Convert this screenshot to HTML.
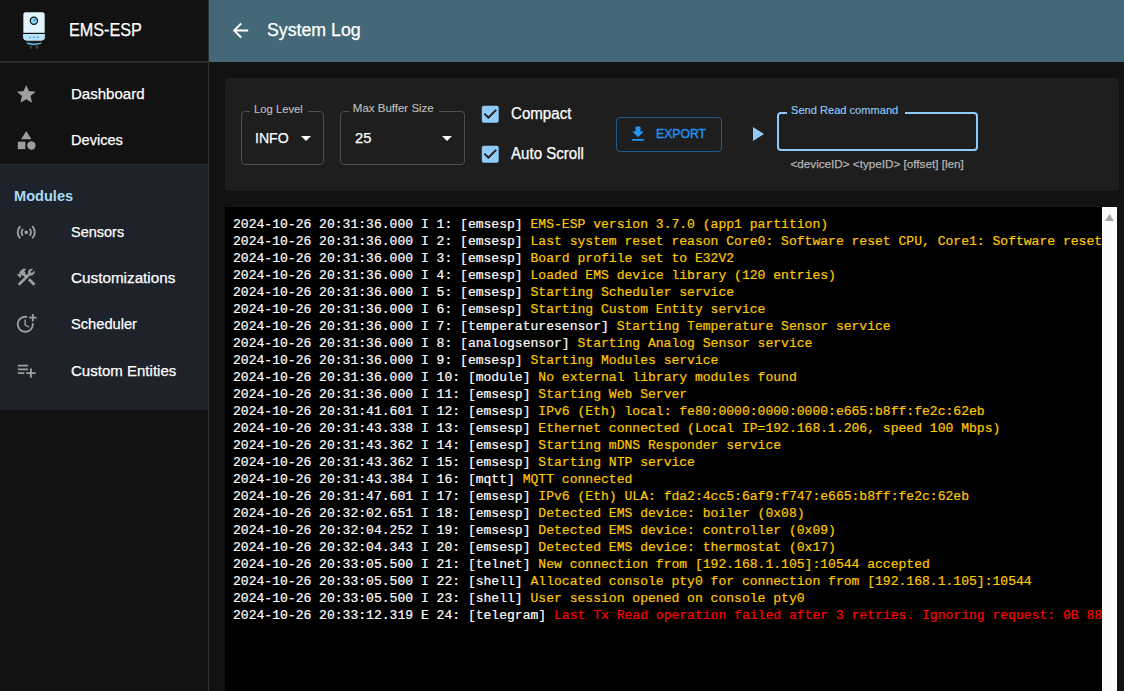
<!DOCTYPE html>
<html>
<head>
<meta charset="utf-8">
<style>
*{box-sizing:border-box;margin:0;padding:0}
html,body{width:1124px;height:691px;overflow:hidden;background:#121212;font-family:"Liberation Sans",sans-serif;color:#fff}
.abs{position:absolute}
#side{position:absolute;left:0;top:0;width:208px;height:691px;background:#121212}
#sideborder{position:absolute;left:208px;top:0;width:1px;height:691px;background:#2e2e2e}
.hline{position:absolute;left:0;width:208px;height:1px;background:#2e2e2e}
#mods{position:absolute;left:0;top:165px;width:208px;height:245px;background:#1e222a}
.nav{position:absolute;left:71px;font-size:15.5px;color:#fff;white-space:nowrap;line-height:1;transform:scaleX(0.97);transform-origin:0 0;-webkit-text-stroke:0.25px currentColor}
.ico{position:absolute;left:15px;width:22.5px;height:22.5px;fill:#9e9e9e}
#hdr{position:absolute;left:209px;top:0;width:915px;height:62px;background:#456879}
#paper{position:absolute;left:225px;top:78px;width:894px;height:113px;background:#1e1e1e;border-radius:4px}
.fld{position:absolute;border:1px solid #4f4f4f;border-radius:4px}
.lbl{position:absolute;font-size:11.5px;color:#bdbdbd;line-height:1;white-space:nowrap;transform-origin:0 0;-webkit-text-stroke:0.15px currentColor}
.t{position:absolute;line-height:1;white-space:nowrap;transform-origin:0 0;-webkit-text-stroke:0.25px currentColor}
.notch{position:absolute;height:4px;background:#1e1e1e}
#log{position:absolute;left:225px;top:207px;width:877px;height:484px;background:#000;overflow:hidden}
#sb{position:absolute;left:1102px;top:207px;width:15px;height:484px;background:#fafafa}
#lines{position:absolute;left:8px;top:9px;font-family:"Liberation Mono",monospace;font-size:13.06px;line-height:17px;white-space:pre;color:#fff;-webkit-text-stroke:0.2px currentColor}
.y{color:#ffc800}
.r{color:#ff0000}
</style>
</head>
<body>
<div id="side">
  <!-- logo -->
  <svg class="abs" style="left:18px;top:8px" width="32" height="44" viewBox="0 0 32 44">
    <path d="M4.7 6.2 Q4.7 3.7 7.5 3.7 L24.5 3.7 Q27.3 3.7 27.3 6.2 L27.3 29.5 Q27.3 33.2 23 33.2 L9 33.2 Q4.7 33.2 4.7 29.5 Z" fill="#e1f5fe" stroke="#111" stroke-width="1.3"/>
    <path d="M5.35 25.6 L26.65 25.6 L26.65 29.5 Q26.65 32.55 23 32.55 L9 32.55 Q5.35 32.55 5.35 29.5 Z" fill="#b3e5fc"/>
    <line x1="4.7" y1="25.4" x2="27.3" y2="25.4" stroke="#111" stroke-width="1.2"/>
    <circle cx="15.9" cy="12.7" r="3.6" fill="#81d4fa" stroke="#111" stroke-width="1.2"/>
    <line x1="15.9" y1="12.7" x2="17.4" y2="11.2" stroke="#111" stroke-width="0.9"/>
    <circle cx="12.1" cy="29.4" r="0.8" fill="#607d8b"/>
    <circle cx="15.9" cy="29.4" r="0.8" fill="#607d8b"/>
    <circle cx="19.7" cy="29.4" r="0.8" fill="#607d8b"/>
    <path d="M8.6 34 Q16.2 36.6 23.9 34.2 L23.9 35.8 Q16.2 38.6 9 36.2 Z" fill="#6ccbf5" stroke="#111" stroke-width="0.5"/>
    <rect x="11.8" y="37.6" width="1.9" height="3.1" fill="#444"/>
    <rect x="17.8" y="37.6" width="2.4" height="3.1" fill="#444"/>
  </svg>
  <div class="t" style="left:68.8px;top:20.7px;font-size:18px;transform:scaleX(0.9)">EMS-ESP</div>
  <div class="hline" style="top:61px;height:2px;background:#2b2b2b"></div>

  <svg class="ico" style="top:83px" viewBox="0 0 24 24"><path d="M12 17.27 18.18 21l-1.64-7.03L22 9.24l-7.19-.61L12 2 9.19 8.63 2 9.24l5.46 4.73L5.82 21z"/></svg>
  <div class="nav" style="top:86px">Dashboard</div>
  <svg class="ico" style="top:129px" viewBox="0 0 24 24"><path d="M12 2l-5.5 9h11z"/><circle cx="17.5" cy="17.5" r="4.5"/><path d="M3 13.5h8v8H3z"/></svg>
  <div class="nav" style="top:131.7px;transform:scaleX(0.94)">Devices</div>
  <div class="hline" style="top:164px"></div>
</div>
<div id="mods">
  <div class="t" style="left:14px;top:23.2px;font-size:15.5px;font-weight:bold;color:#a8daf5;transform:scaleX(0.94);-webkit-text-stroke:0">Modules</div>
  <svg class="ico" style="top:56px" viewBox="0 0 24 24"><path d="M7.76 16.24C6.67 15.16 6 13.66 6 12s.67-3.16 1.76-4.24l1.42 1.42C8.45 9.9 8 10.9 8 12c0 1.1.45 2.1 1.17 2.83l-1.41 1.41zm8.48 0C17.33 15.16 18 13.66 18 12s-.67-3.16-1.76-4.24l-1.42 1.42C15.55 9.9 16 10.9 16 12c0 1.1-.45 2.1-1.17 2.83l1.41 1.41zM12 10c-1.1 0-2 .9-2 2s.9 2 2 2 2-.9 2-2-.9-2-2-2zm8 2c0 2.21-.9 4.21-2.35 5.65l1.42 1.42C20.88 17.26 22 14.76 22 12s-1.12-5.26-2.93-7.07l-1.42 1.42C19.1 7.79 20 9.79 20 12zM6.35 6.35 4.93 4.93C3.12 6.74 2 9.24 2 12s1.12 5.26 2.93 7.07l1.42-1.42C4.9 16.21 4 14.21 4 12s.9-4.21 2.35-5.65z"/></svg>
  <div class="nav" style="top:59px;transform:scaleX(0.935)">Sensors</div>
  <svg class="ico" style="top:101px" viewBox="0 0 24 24"><path d="m13.7826 15.1719 2.1213-2.1213 5.9963 5.9962-2.1213 2.1213zM17.5 10c1.93 0 3.5-1.57 3.5-3.5 0-.58-.16-1.12-.41-1.6l-2.7 2.7-1.49-1.49 2.7-2.7c-.48-.25-1.02-.41-1.6-.41C15.57 3 14 4.570 14 6.5c0 .41.08.8.21 1.16l-1.85 1.85-1.780-1.78.71-.71-1.41-1.41L12 3.49c-1.17-1.17-3.07-1.17-4.24 0L4.22 7.03l1.41 1.41H2.81l-.71.71 3.54 3.54.71-.71V9.15l1.41 1.41.71-.71 1.78 1.78-7.41 7.41 2.12 2.12L16.34 9.79c.36.13.75.21 1.16.21z"/></svg>
  <div class="nav" style="top:104.5px;transform:scaleX(0.985)">Customizations</div>
  <svg class="ico" style="top:147px" viewBox="0 0 24 24"><path d="M10 8v6l4.7 2.9.8-1.2-4-2.4V8z"/><path d="M17.92 12c.05.33.08.66.08 1 0 3.9-3.1 7-7 7s-7-3.1-7-7 3.1-7 7-7c.7 0 1.37.1 2 .29V4.23c-.64-.15-1.31-.23-2-.23-5 0-9 4-9 9s4 9 9 9 9-4 9-9c0-.34-.02-.67-.06-1h-2.02z"/><path d="M20 5V2h-2v3h-3v2h3v3h2V7h3V5z"/></svg>
  <div class="nav" style="top:151px;transform:scaleX(0.945)">Scheduler</div>
  <svg class="ico" style="top:194px" viewBox="0 0 24 24"><path d="M14 10H3v2h11v-2zm0-4H3v2h11V6zm4 8v-4h-2v4h-4v2h4v4h2v-4h4v-2h-4zM3 16h7v-2H3v2z"/></svg>
  <div class="nav" style="top:197.7px">Custom Entities</div>
</div>
<div id="sideborder"></div>

<div id="hdr">
  <svg class="abs" style="left:19.5px;top:18.9px;fill:#fff" width="23" height="23" viewBox="0 0 24 24"><path d="M20 11H7.83l5.59-5.59L12 4l-8 8 8 8 1.410-1.41L7.83 13H20v-2z"/></svg>
  <div class="t" style="left:57.7px;top:20.8px;font-size:18px;transform:scaleX(0.985)">System Log</div>
</div>

<div id="paper">
  <!-- Log level -->
  <div class="fld" style="left:16px;top:33px;width:83px;height:54px"></div>
  <div class="notch" style="left:25px;top:31px;width:58px"></div>
  <div class="lbl" style="left:29px;top:25.5px;transform:scaleX(0.98)">Log Level</div>
  <div class="t" style="left:29.7px;top:52px;font-size:15.5px;transform:scaleX(0.91)">INFO</div>
  <svg class="abs" style="left:69px;top:47.7px;fill:#fff" width="24" height="24" viewBox="0 0 24 24"><path d="M7 10l5 5 5-5z"/></svg>
  <!-- Buffer -->
  <div class="fld" style="left:115px;top:33px;width:125px;height:54px"></div>
  <div class="notch" style="left:124.2px;top:31px;width:89.7px"></div>
  <div class="lbl" style="left:127.8px;top:25.3px;transform:scaleX(1.0)">Max Buffer Size</div>
  <div class="t" style="left:129.5px;top:52px;font-size:15.5px;transform:scaleX(0.95)">25</div>
  <svg class="abs" style="left:210.3px;top:48.2px;fill:#fff" width="24" height="24" viewBox="0 0 24 24"><path d="M7 10l5 5 5-5z"/></svg>
  <!-- checkboxes -->
  <svg class="abs" style="left:254px;top:25px;fill:#90caf9" width="22.5" height="22.5" viewBox="0 0 24 24"><path d="M19 3H5c-1.11 0-2 .9-2 2v14c0 1.1.89 2 2 2h14c1.11 0 2-.9 2-2V5c0-1.1-.89-2-2-2zm-9 14l-5-5 1.41-1.41L10 14.17l7.59-7.59L19 8l-9 9z"/></svg>
  <div class="t" style="left:286px;top:28.3px;font-size:15.6px;transform:scaleX(0.968)">Compact</div>
  <svg class="abs" style="left:254px;top:65px;fill:#90caf9" width="22.5" height="22.5" viewBox="0 0 24 24"><path d="M19 3H5c-1.11 0-2 .9-2 2v14c0 1.1.89 2 2 2h14c1.11 0 2-.9 2-2V5c0-1.1-.89-2-2-2zm-9 14l-5-5 1.41-1.41L10 14.17l7.59-7.59L19 8l-9 9z"/></svg>
  <div class="t" style="left:286px;top:67.7px;font-size:15.6px;transform:scaleX(0.967)">Auto Scroll</div>
  <!-- export -->
  <div class="abs" style="left:391px;top:39px;width:106px;height:35px;border:1px solid rgba(33,150,243,0.5);border-radius:4px"></div>
  <svg class="abs" style="left:402.5px;top:46px;fill:#2196f3" width="20" height="20" viewBox="0 0 24 24"><path d="M5 20h14v-2H5v2zM19 9h-4V3H9v6H5l7 7 7-7z"/></svg>
  <div class="t" style="left:431px;top:50.1px;font-size:12.6px;color:#2196f3;transform:scaleX(0.97);-webkit-text-stroke:0.35px #2196f3">EXPORT</div>
  <!-- play -->
  <svg class="abs" style="left:520px;top:44px;fill:#90caf9" width="24" height="24" viewBox="0 0 24 24"><path d="M8 5v14l11-7z"/></svg>
  <!-- send read -->
  <div class="abs" style="left:552px;top:34px;width:201px;height:39px;border:2px solid #90caf9;border-radius:4px"></div>
  <div class="notch" style="left:561.6px;top:33px;width:118.4px"></div>
  <div class="lbl" style="left:566px;top:27.1px;color:#90caf9;transform:scaleX(0.964)">Send Read command</div>
  <div class="t" style="left:565.5px;top:79.9px;font-size:11.7px;color:#b3b3b3">&lt;deviceID&gt; &lt;typeID&gt; [offset] [len]</div>
</div>

<div id="log">
<div id="lines">2024-10-26 20:31:36.000 I 1: [emsesp] <span class="y">EMS-ESP version 3.7.0 (app1 partition)</span>
2024-10-26 20:31:36.000 I 2: [emsesp] <span class="y">Last system reset reason Core0: Software reset CPU, Core1: Software reset CPU</span>
2024-10-26 20:31:36.000 I 3: [emsesp] <span class="y">Board profile set to E32V2</span>
2024-10-26 20:31:36.000 I 4: [emsesp] <span class="y">Loaded EMS device library (120 entries)</span>
2024-10-26 20:31:36.000 I 5: [emsesp] <span class="y">Starting Scheduler service</span>
2024-10-26 20:31:36.000 I 6: [emsesp] <span class="y">Starting Custom Entity service</span>
2024-10-26 20:31:36.000 I 7: [temperaturesensor] <span class="y">Starting Temperature Sensor service</span>
2024-10-26 20:31:36.000 I 8: [analogsensor] <span class="y">Starting Analog Sensor service</span>
2024-10-26 20:31:36.000 I 9: [emsesp] <span class="y">Starting Modules service</span>
2024-10-26 20:31:36.000 I 10: [module] <span class="y">No external library modules found</span>
2024-10-26 20:31:36.000 I 11: [emsesp] <span class="y">Starting Web Server</span>
2024-10-26 20:31:41.601 I 12: [emsesp] <span class="y">IPv6 (Eth) local: fe80:0000:0000:0000:e665:b8ff:fe2c:62eb</span>
2024-10-26 20:31:43.338 I 13: [emsesp] <span class="y">Ethernet connected (Local IP=192.168.1.206, speed 100 Mbps)</span>
2024-10-26 20:31:43.362 I 14: [emsesp] <span class="y">Starting mDNS Responder service</span>
2024-10-26 20:31:43.362 I 15: [emsesp] <span class="y">Starting NTP service</span>
2024-10-26 20:31:43.384 I 16: [mqtt] <span class="y">MQTT connected</span>
2024-10-26 20:31:47.601 I 17: [emsesp] <span class="y">IPv6 (Eth) ULA: fda2:4cc5:6af9:f747:e665:b8ff:fe2c:62eb</span>
2024-10-26 20:32:02.651 I 18: [emsesp] <span class="y">Detected EMS device: boiler (0x08)</span>
2024-10-26 20:32:04.252 I 19: [emsesp] <span class="y">Detected EMS device: controller (0x09)</span>
2024-10-26 20:32:04.343 I 20: [emsesp] <span class="y">Detected EMS device: thermostat (0x17)</span>
2024-10-26 20:33:05.500 I 21: [telnet] <span class="y">New connection from [192.168.1.105]:10544 accepted</span>
2024-10-26 20:33:05.500 I 22: [shell] <span class="y">Allocated console pty0 for connection from [192.168.1.105]:10544</span>
2024-10-26 20:33:05.500 I 23: [shell] <span class="y">User session opened on console pty0</span>
2024-10-26 20:33:12.319 E 24: [telegram] <span class="r">Last Tx Read operation failed after 3 retries. Ignoring request: 0B 88 02 00 20</span></div>
</div>
<div id="sb">
  <svg class="abs" style="left:2px;top:5px" width="11" height="9" viewBox="0 0 11 9"><path d="M1 9.6 L5.5 2.6 L10 9.6 Z" fill="#a3a3a3" stroke="#a3a3a3" stroke-width="0.6" stroke-linejoin="round"/></svg>
</div>
</body>
</html>
